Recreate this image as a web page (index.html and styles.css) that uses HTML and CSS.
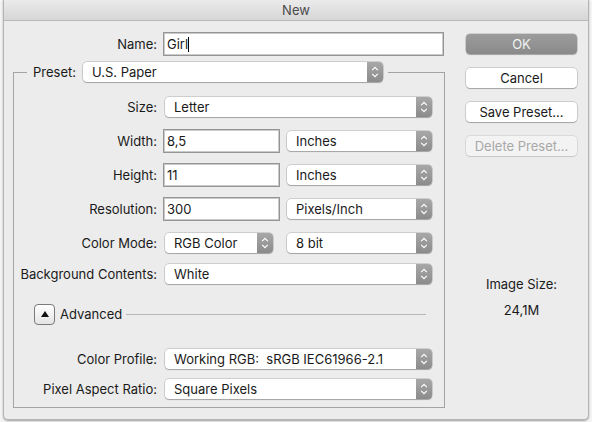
FILE: index.html
```html
<!DOCTYPE html>
<html lang="en">

<head>
    <meta charset="UTF-8">
    <title>New</title>
    <link rel="stylesheet" href="styles.css">
</head>

<body>
    <div class="window">
        <div class="titlebar">New</div>
        <div class="content">
            <div class="main">
                <div class="row name-row">
                    <label class="label">Name:</label>
                    <div class="field name-field">Girl<span class="caret"></span></div>
                </div>

                <fieldset class="preset">
                    <legend>
                        <label class="legend-label">Preset:</label>
                        <div class="popup preset-popup">
                            <span class="popup-text">U.S. Paper</span>
                            <span class="stepper"><svg width="8" height="12" viewBox="0 0 8 12"><path d="M1.2 4.2 4 1.4 6.8 4.2M1.2 7.8 4 10.6 6.8 7.8" /></svg></span>
                        </div>
                    </legend>

                    <div class="row size-row">
                        <label class="label">Size:</label>
                        <div class="popup full">
                            <span class="popup-text">Letter</span>
                            <span class="stepper"><svg width="8" height="12" viewBox="0 0 8 12"><path d="M1.2 4.2 4 1.4 6.8 4.2M1.2 7.8 4 10.6 6.8 7.8" /></svg></span>
                        </div>
                    </div>

                    <div class="row">
                        <label class="label">Width:</label>
                        <div class="field num-field">8,5</div>
                        <div class="popup unit">
                            <span class="popup-text">Inches</span>
                            <span class="stepper"><svg width="8" height="12" viewBox="0 0 8 12"><path d="M1.2 4.2 4 1.4 6.8 4.2M1.2 7.8 4 10.6 6.8 7.8" /></svg></span>
                        </div>
                    </div>

                    <div class="row">
                        <label class="label">Height:</label>
                        <div class="field num-field">11</div>
                        <div class="popup unit">
                            <span class="popup-text">Inches</span>
                            <span class="stepper"><svg width="8" height="12" viewBox="0 0 8 12"><path d="M1.2 4.2 4 1.4 6.8 4.2M1.2 7.8 4 10.6 6.8 7.8" /></svg></span>
                        </div>
                    </div>

                    <div class="row">
                        <label class="label">Resolution:</label>
                        <div class="field num-field">300</div>
                        <div class="popup unit">
                            <span class="popup-text">Pixels/Inch</span>
                            <span class="stepper"><svg width="8" height="12" viewBox="0 0 8 12"><path d="M1.2 4.2 4 1.4 6.8 4.2M1.2 7.8 4 10.6 6.8 7.8" /></svg></span>
                        </div>
                    </div>

                    <div class="row mode-row">
                        <label class="label">Color Mode:</label>
                        <div class="popup mode">
                            <span class="popup-text">RGB Color</span>
                            <span class="stepper"><svg width="8" height="12" viewBox="0 0 8 12"><path d="M1.2 4.2 4 1.4 6.8 4.2M1.2 7.8 4 10.6 6.8 7.8" /></svg></span>
                        </div>
                        <div class="popup unit bits">
                            <span class="popup-text">8 bit</span>
                            <span class="stepper"><svg width="8" height="12" viewBox="0 0 8 12"><path d="M1.2 4.2 4 1.4 6.8 4.2M1.2 7.8 4 10.6 6.8 7.8" /></svg></span>
                        </div>
                    </div>

                    <div class="row bg-row">
                        <label class="label">Background Contents:</label>
                        <div class="popup full">
                            <span class="popup-text">White</span>
                            <span class="stepper"><svg width="8" height="12" viewBox="0 0 8 12"><path d="M1.2 4.2 4 1.4 6.8 4.2M1.2 7.8 4 10.6 6.8 7.8" /></svg></span>
                        </div>
                    </div>

                    <div class="advanced">
                        <button class="disclosure"><span class="triangle"></span></button>
                        <span class="advanced-text">Advanced</span>
                        <span class="separator"></span>
                    </div>

                    <div class="row profile-row">
                        <label class="label">Color Profile:</label>
                        <div class="popup full">
                            <span class="popup-text">Working RGB:&nbsp; sRGB IEC61966-2.1</span>
                            <span class="stepper"><svg width="8" height="12" viewBox="0 0 8 12"><path d="M1.2 4.2 4 1.4 6.8 4.2M1.2 7.8 4 10.6 6.8 7.8" /></svg></span>
                        </div>
                    </div>

                    <div class="row ratio-row">
                        <label class="label">Pixel Aspect Ratio:</label>
                        <div class="popup full">
                            <span class="popup-text">Square Pixels</span>
                            <span class="stepper"><svg width="8" height="12" viewBox="0 0 8 12"><path d="M1.2 4.2 4 1.4 6.8 4.2M1.2 7.8 4 10.6 6.8 7.8" /></svg></span>
                        </div>
                    </div>
                </fieldset>
            </div>

            <div class="side">
                <button class="btn btn-default">OK</button>
                <button class="btn">Cancel</button>
                <button class="btn">Save Preset...</button>
                <button class="btn" disabled>Delete Preset...</button>
                <div class="image-size">
                    <p>Image Size:</p>
                    <p class="size-value">24,1M</p>
                </div>
            </div>
        </div>
    </div>
</body>

</html>
```

FILE: styles.css
```css
* {
    margin: 0;
    padding: 0;
    box-sizing: border-box;
}

body {
    background: #f4f4f4;
    font-family: 'Inter', 'Liberation Sans', sans-serif;
    font-size: 13px;
    color: #1a1a1a;
    height: 422px;
    overflow: hidden;
}

.window {
    margin: 0 3px;
    height: 420px;
    background: #ececec;
    border: 1px solid #b4b4b4;
    border-top: none;
    border-radius: 0 0 5px 5px;
    box-shadow: 0 1px 2px rgba(0, 0, 0, 0.35);
    overflow: hidden;
}

.titlebar {
    height: 21px;
    line-height: 20px;
    text-align: center;
    color: #4b4b4b;
    background: linear-gradient(#ebebeb, #d6d6d6);
    border-bottom: 1px solid #b9b9b9;
    margin: 0 -4px;
}

.content {
    display: flex;
    padding: 11px 0 0 9px;
}

.main {
    width: 432px;
}

/* rows */

.row {
    display: flex;
    align-items: center;
    height: 24px;
}

.label {
    width: 143px;
    margin-right: 6px;
    text-align: right;
    white-space: nowrap;
}

.name-row .label {
    width: 144px;
}

.field {
    height: 24px;
    line-height: 22px;
    padding-left: 3px;
    background: #fff;
    border: 1px solid #959595;
    box-shadow: inset 0 0 0 1px #cacaca;
}

.name-field {
    width: 281px;
}

.caret {
    display: inline-block;
    width: 1px;
    height: 15px;
    background: #000;
    vertical-align: -3px;
}

.num-field {
    width: 117px;
    margin-right: 7px;
}

/* popup buttons */

.popup {
    display: flex;
    align-items: stretch;
    height: 20px;
    background: #fff;
    border-radius: 4px;
    box-shadow: 0 0 0 0.5px rgba(0, 0, 0, 0.25), 0 1px 1px rgba(0, 0, 0, 0.2);
}

.popup-text {
    flex: 1;
    padding-left: 9px;
    line-height: 20px;
    white-space: nowrap;
    overflow: hidden;
}

.stepper {
    width: 16px;
    display: flex;
    align-items: center;
    justify-content: center;
    background: linear-gradient(#a8a8a8, #8b8b8b);
    border-radius: 0 4px 4px 0;
}

.stepper path {
    fill: none;
    stroke: #fff;
    stroke-width: 1.2;
}

.full {
    width: 267px;
    margin-left: 2px;
}

.unit {
    width: 145px;
}

.mode {
    width: 108px;
    margin: 0 14px 0 2px;
}

/* preset group */

.preset {
    margin-top: 6px;
    border: 1px solid #a4a4a4;
    padding: 13px 0 6px 0;
    height: 346px;
}

.preset legend {
    display: flex;
    align-items: center;
    margin-left: 13px;
    padding: 0 5px 0 6px;
}

.legend-label {
    width: 50px;
}

.preset-popup {
    width: 300px;
}

.row + .row {
    margin-top: 10px;
}

.mode-row {
    margin-top: 9px;
}

.bg-row.row {
    margin-top: 7px;
}

.advanced {
    display: flex;
    align-items: center;
    height: 24px;
    margin: 16px 0 0 20px;
}

.disclosure {
    width: 21px;
    height: 21px;
    border: 1px solid #7b7b7b;
    border-radius: 4px;
    background: linear-gradient(#ffffff, #e4e4e4);
    display: flex;
    align-items: center;
    justify-content: center;
}

.triangle {
    width: 0;
    height: 0;
    border-left: 4px solid transparent;
    border-right: 4px solid transparent;
    border-bottom: 6px solid #111;
    margin-top: -1px;
}

.advanced-text {
    margin-left: 5px;
}

.separator {
    flex: 0 0 300px;
    height: 1px;
    margin-left: auto;
    margin-right: 18px;
    background: #b6b6b6;
}

.row.profile-row {
    margin-top: 21px;
}

.row.ratio-row {
    margin-top: 6px;
}

/* side buttons */

.side {
    width: 111px;
    margin-left: 21px;
    padding-top: 2px;
    display: flex;
    flex-direction: column;
    gap: 14px;
}

.btn {
    height: 20px;
    font-family: inherit;
    font-size: 13px;
    color: #1a1a1a;
    background: #fff;
    border: none;
    border-radius: 4px;
    box-shadow: 0 0 0 0.5px rgba(0, 0, 0, 0.25), 0 1px 1px rgba(0, 0, 0, 0.2);
}

.btn-default {
    color: #f2f2f2;
    background: linear-gradient(#9c9c9c, #8a8a8a);
}

.btn:disabled {
    color: #a8a8a8;
    background: #f3f3f3;
    box-shadow: 0 0 0 0.5px rgba(0, 0, 0, 0.15), 0 1px 1px rgba(0, 0, 0, 0.08);
}

.image-size {
    margin-top: 106px;
    text-align: center;
    line-height: 16px;
}

.size-value {
    margin-top: 10px;
}
```
